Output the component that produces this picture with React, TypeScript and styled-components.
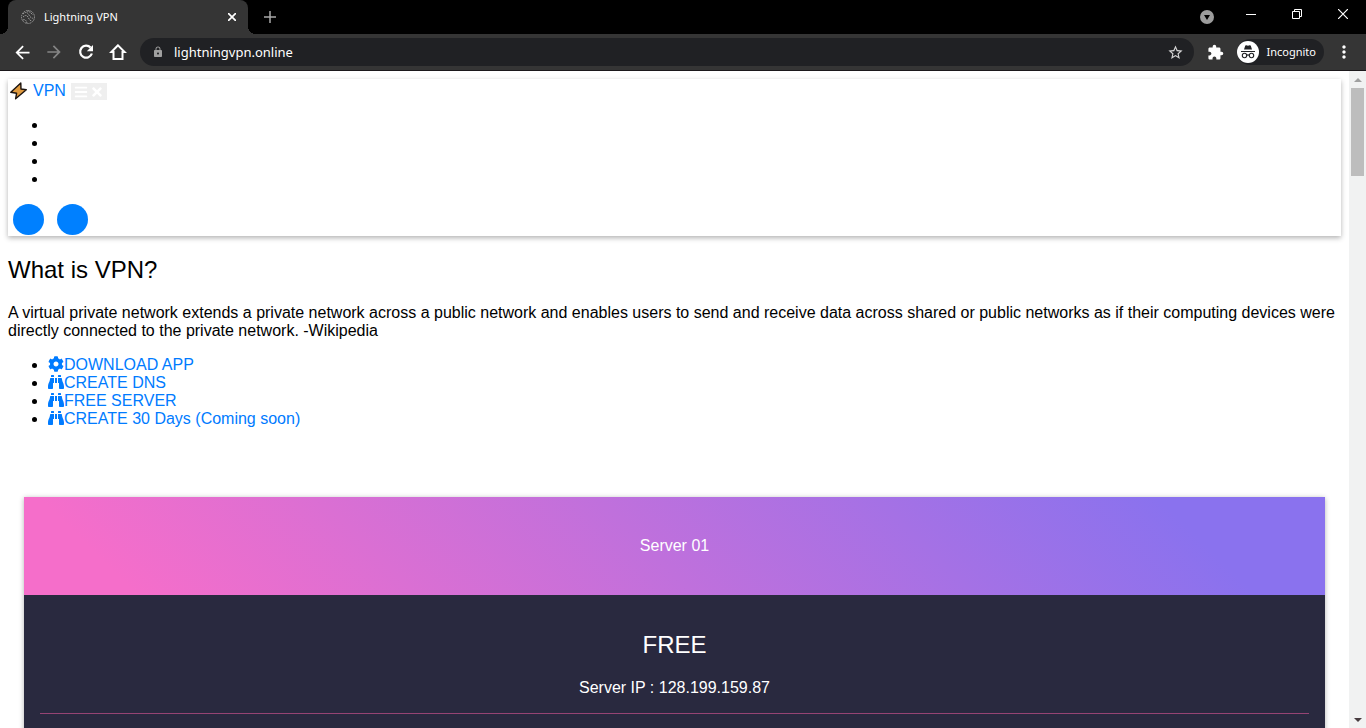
import React from "react";
import styled, { createGlobalStyle } from "styled-components";
import { FaBars, FaBinoculars, FaCog, FaTimes } from "react-icons/fa";
import {
  MdArrowBack,
  MdArrowForward,
  MdExtension,
  MdLock,
  MdMoreVert,
  MdStarBorder,
} from "react-icons/md";

const GlobalStyle = createGlobalStyle`
  *, *::before, *::after { box-sizing: border-box; }
  body {
    margin: 0;
    overflow: hidden;
    font-family: "Liberation Sans", Arial, sans-serif;
    font-size: 16px;
    line-height: 18px;
    color: #000;
    background: #fff;
  }
  button, input { font: inherit; border: 0; padding: 0; margin: 0; }
  svg { display: block; flex: none; }
`;

const BrowserWindow = styled.div`
  display: flex;
  flex-direction: column;
  height: 100vh;
`;

const TabStrip = styled.header`
  display: flex;
  flex: none;
  height: 34px;
  padding-left: 8px;
  background: #000;
  font-family: "Noto Sans", "Open Sans", sans-serif;
`;

const Tab = styled.div`
  position: relative;
  display: flex;
  align-items: center;
  width: 240px;
  padding: 0 8px 0 12px;
  gap: 8px;
  border-radius: 8px 8px 0 0;
  background: #353535;
  color: #fff;
  font-size: 11px;

  &::before,
  &::after {
    content: "";
    position: absolute;
    bottom: 0;
    width: 8px;
    height: 8px;
  }
  &::before {
    right: 100%;
    background: radial-gradient(circle at 0 0, #000 8px, #353535 8px);
  }
  &::after {
    left: 100%;
    background: radial-gradient(circle at 100% 0, #000 8px, #353535 8px);
  }
`;

const TabTitle = styled.span`
  flex: 1;
`;

const ChromeButton = styled.button<{ $width?: number; $dim?: boolean }>`
  display: flex;
  align-items: center;
  justify-content: center;
  flex: none;
  width: ${(p) => p.$width ?? 32}px;
  background: transparent;
  color: ${(p) => (p.$dim ? "#858585" : "#fff")};
`;

const WindowControls = styled.div`
  display: flex;
  align-items: flex-start;
  margin-left: auto;

  > button {
    height: 28px;
  }
  > button:first-child {
    height: 34px;
  }
`;

const Toolbar = styled.div`
  display: flex;
  flex: none;
  align-items: center;
  height: 37px;
  padding: 0 6px;
  background: #353535;
  border-bottom: 1px solid #1b181b;
  font-family: "Noto Sans", "Open Sans", sans-serif;
`;

const AddressBar = styled.div`
  display: flex;
  flex: 1;
  align-items: center;
  gap: 10px;
  height: 28px;
  margin: 0 6px;
  padding: 0 2px 0 12px;
  border-radius: 14px;
  background: #202124;
  color: #a0a0a0;
`;

const AddressInput = styled.input`
  flex: 1;
  min-width: 0;
  background: transparent;
  color: #fff;
  font-size: 13px;
  outline: 0;
`;

const IncognitoChip = styled.button`
  display: flex;
  align-items: center;
  gap: 8px;
  height: 26px;
  padding: 0 8px 0 0;
  margin: 0 4px 0 5px;
  border-radius: 13px;
  background: #202124;
  color: #fff;
  font-size: 11px;
`;

const Viewport = styled.div`
  display: flex;
  flex: 1;
  min-height: 0;
`;

const Page = styled.main`
  flex: 1;
  min-width: 0;
  padding: 8px;
  overflow: hidden;
`;

const ScrollTrack = styled.div`
  display: flex;
  flex-direction: column;
  align-items: center;
  flex: none;
  width: 17px;
  background: #f1f2f2;
`;

const ScrollArrow = styled.button<{ $color: string }>`
  display: flex;
  align-items: center;
  justify-content: center;
  width: 17px;
  height: 17px;
  background: transparent;
  color: ${(p) => p.$color};
`;

const ScrollThumb = styled.div`
  width: 13px;
  height: 88px;
  margin-bottom: auto;
  background: #bdbdbd;
`;

const SiteNav = styled.nav`
  padding-bottom: 1px;
  box-shadow: 0 2px 5px rgba(0, 0, 0, 0.3);
`;

const BrandRow = styled.div`
  display: flex;
  align-items: center;
  height: 21px;
  padding-top: 2px;
  gap: 5px;
`;

const Link = styled.a`
  color: #007bff;
  text-decoration: none;

  svg {
    display: inline-block;
    vertical-align: -2px;
  }
`;

const BrandLink = styled(Link)`
  display: flex;
  align-items: center;
  gap: 4px;
`;

const MenuToggle = styled.button`
  display: flex;
  align-items: center;
  justify-content: center;
  gap: 2px;
  width: 36px;
  height: 17px;
  margin-top: 2px;
  background: #efefef;
  color: #fff;
`;

const BulletList = styled.ul`
  margin: 16px 0;
  padding-left: 40px;

  li {
    height: 18px;
  }
`;

const RoundButtons = styled.div`
  display: flex;
  gap: 13px;
  padding-left: 5px;
`;

const RoundButton = styled.button`
  width: 31px;
  height: 31px;
  border-radius: 50%;
  background: #0080ff;
`;

const Heading = styled.h2`
  margin: 20px 0 21px;
  font-size: 24px;
  font-weight: 400;
  line-height: 27px;
`;

const Paragraph = styled.p`
  margin: 16px 0;
`;

const ServerCard = styled.section`
  margin: 69px 16px 0;
  background: #29293f;
  box-shadow: 0 1px 5px rgba(0, 0, 0, 0.3);
  color: #fff;
  text-align: center;
`;

const ServerName = styled.header`
  padding: 40px 16px;
  background: linear-gradient(45deg, #f56eca 8%, #8a72ee 88%);
`;

const ServerBody = styled.div`
  padding: 16px;
`;

const Divider = styled.hr`
  margin: 16px 0 40px;
  border: 0;
  border-top: 1px solid #964474;
`;

const Favicon = () => (
  <svg width="16" height="16" viewBox="0 0 16 16" fill="none" stroke="#9a9a9a" strokeWidth="1" strokeDasharray="1.5 .8">
    <circle cx="8" cy="8" r="6.5" />
    <path d="M3 5c3-3 5-1 6 1s3 4 5 3M3 8c2-2 4-2 5 0s2 4 4 4M3 11c2-1 3 0 4 3M7 2c2 0 4 2 6 4" />
  </svg>
);

const ReloadIcon = () => (
  <svg width="16" height="16" viewBox="0 0 16 16">
    <path d="M12.600 3.600A6 6 0 1 0 13.900 9.500" fill="none" stroke="currentColor" strokeWidth="2.200" />
    <path d="M15 1v6.200H8.800z" fill="currentColor" />
  </svg>
);

const HomeIcon = () => (
  <svg width="18" height="18" viewBox="0 0 18 18" fill="none" stroke="currentColor" strokeWidth="2">
    <path d="M9 2.300 2.400 9H4.500v7h9V9h2.100z" />
  </svg>
);

const IncognitoIcon = () => (
  <svg width="22" height="22" viewBox="0 0 22 22">
    <circle cx="11" cy="11" r="11" fill="#fff" />
    <path d="M7 8.500 8.200 4.800c.2-.5.6-.7 1.100-.5l1.700.5 1.700-.5c.5-.2.9 0 1.100.5L15 8.500z" fill="#202124" />
    <path d="M4 10.500h14M9.700 14.300q1.300-.8 2.600 0" stroke="#202124" strokeWidth="1.200" fill="none" />
    <circle cx="7.500" cy="14.500" r="2.200" fill="none" stroke="#202124" strokeWidth="1.100" />
    <circle cx="14.500" cy="14.500" r="2.200" fill="none" stroke="#202124" strokeWidth="1.100" />
  </svg>
);

const BoltIcon = () => (
  <svg width="21" height="20" viewBox="0 0 21 20">
    <path
      d="M12.800 2 2.800 11.300l5.800 1L7.600 17.800 18.300 8.800l-5.300-.8z"
      fill="#e09a3e"
      stroke="#1c1410"
      strokeWidth="1.400"
      strokeLinejoin="round"
    />
  </svg>
);

const services = [
  { icon: FaCog, label: "DOWNLOAD APP" },
  { icon: FaBinoculars, label: "CREATE DNS" },
  { icon: FaBinoculars, label: "FREE SERVER" },
  { icon: FaBinoculars, label: "CREATE 30 Days (Coming soon)" },
];

export default function App() {
  return (
    <BrowserWindow>
      <GlobalStyle />
      <TabStrip>
        <Tab>
          <Favicon />
          <TabTitle>Lightning VPN</TabTitle>
          <ChromeButton $width={16} aria-label="Close tab">
            <svg width="8" height="8" viewBox="0 0 8 8" stroke="currentColor" strokeWidth="1.700">
              <path d="m0 0 8 8M8 0 0 8" />
            </svg>
          </ChromeButton>
        </Tab>
        <ChromeButton $width={44} aria-label="New tab">
          <svg width="12" height="12" viewBox="0 0 12 12" stroke="#a8a8a8" strokeWidth="1.500">
            <path d="M6 0v12M0 6h12" />
          </svg>
        </ChromeButton>
        <WindowControls>
          <ChromeButton $width={42} aria-label="Search tabs">
            <svg width="14" height="14" viewBox="0 0 14 14">
              <circle cx="7" cy="7" r="7" fill="#9c9c9c" />
              <path d="M4 5h6l-3 5z" fill="#000" />
            </svg>
          </ChromeButton>
          <ChromeButton $width={46} aria-label="Minimize">
            <svg width="10" height="10" viewBox="0 0 10 10" stroke="currentColor">
              <path d="M0 5.500h10" />
            </svg>
          </ChromeButton>
          <ChromeButton $width={46} aria-label="Restore">
            <svg width="10" height="10" viewBox="0 0 10 10" fill="none" stroke="currentColor">
              <path d="M.5 2.500h7v7h-7zM2.500 2.500v-2h7v7h-2" />
            </svg>
          </ChromeButton>
          <ChromeButton $width={46} aria-label="Close window">
            <svg width="10" height="10" viewBox="0 0 10 10" stroke="currentColor" strokeWidth="1.200">
              <path d="m0 0 10 10M10 0 0 10" />
            </svg>
          </ChromeButton>
        </WindowControls>
      </TabStrip>

      <Toolbar>
        <ChromeButton aria-label="Back"><MdArrowBack size={21} /></ChromeButton>
        <ChromeButton $dim aria-label="Forward"><MdArrowForward size={20} /></ChromeButton>
        <ChromeButton aria-label="Reload"><ReloadIcon /></ChromeButton>
        <ChromeButton aria-label="Home"><HomeIcon /></ChromeButton>
        <AddressBar>
          <MdLock size={12} />
          <AddressInput aria-label="Address" defaultValue="lightningvpn.online" />
          <ChromeButton aria-label="Bookmark this page"><MdStarBorder size={17} color="#d5d5d5" /></ChromeButton>
        </AddressBar>
        <ChromeButton aria-label="Extensions"><MdExtension size={17} /></ChromeButton>
        <IncognitoChip>
          <IncognitoIcon />
          Incognito
        </IncognitoChip>
        <ChromeButton aria-label="Browser menu"><MdMoreVert size={20} /></ChromeButton>
      </Toolbar>

      <Viewport>
        <Page>
          <SiteNav>
            <BrandRow>
              <BrandLink href="#">
                <BoltIcon />
                VPN
              </BrandLink>
              <MenuToggle aria-label="Toggle menu">
                <FaBars size={14} />
                <FaTimes size={14} />
              </MenuToggle>
            </BrandRow>
            <BulletList>
              <li />
              <li />
              <li />
              <li />
            </BulletList>
            <RoundButtons>
              <RoundButton aria-label="Previous" />
              <RoundButton aria-label="Next" />
            </RoundButtons>
          </SiteNav>

          <Heading>What is VPN?</Heading>
          <Paragraph>
            A virtual private network extends a private network across a public network and enables users to send and
            receive data across shared or public networks as if their computing devices were directly connected to the
            private network. -Wikipedia
          </Paragraph>
          <BulletList>
            {services.map(({ icon: Icon, label }) => (
              <li key={label}>
                <Link href="#">
                  <Icon size={16} />
                  {label}
                </Link>
              </li>
            ))}
          </BulletList>

          <ServerCard>
            <ServerName>Server 01</ServerName>
            <ServerBody>
              <Heading>FREE</Heading>
              <Paragraph>Server IP : 128.199.159.87</Paragraph>
              <Divider />
            </ServerBody>
          </ServerCard>
        </Page>

        <ScrollTrack>
          <ScrollArrow $color="#a0a0a0" aria-label="Scroll up">
            <svg width="8" height="4" viewBox="0 0 8 4" fill="currentColor"><path d="M0 4 4 0l4 4z" /></svg>
          </ScrollArrow>
          <ScrollThumb />
          <ScrollArrow $color="#483c40" aria-label="Scroll down">
            <svg width="8" height="4" viewBox="0 0 8 4" fill="currentColor"><path d="m0 0 4 4 4-4z" /></svg>
          </ScrollArrow>
        </ScrollTrack>
      </Viewport>
    </BrowserWindow>
  );
}
